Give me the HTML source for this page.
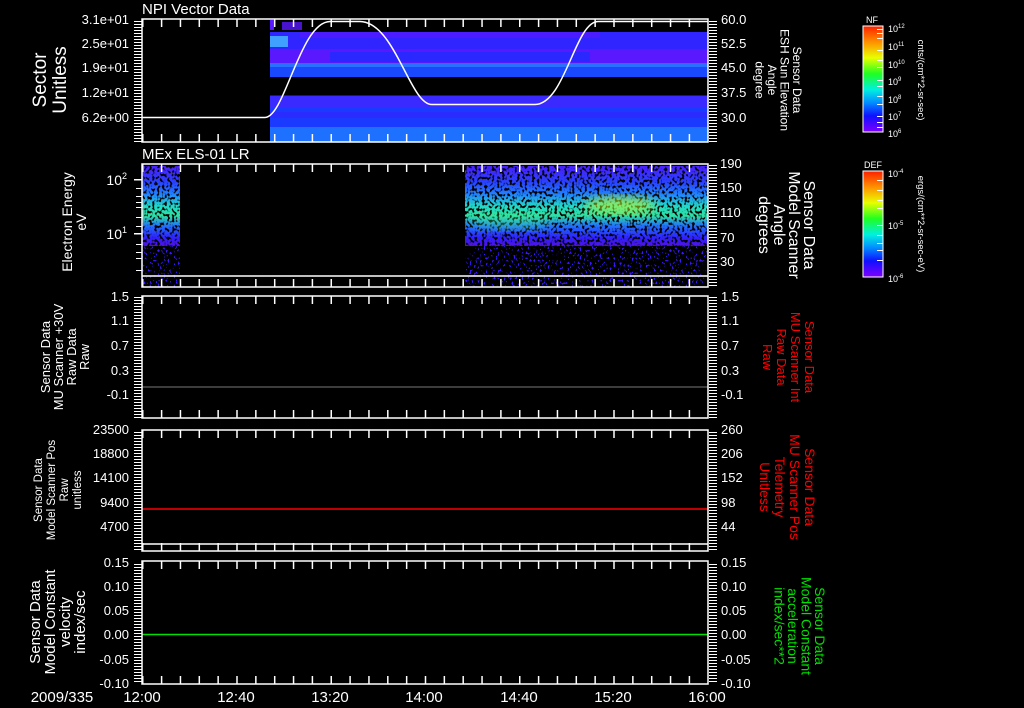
<!DOCTYPE html>
<html><head><meta charset="utf-8"><style>
html,body{margin:0;padding:0;background:#000;width:1024px;height:708px;overflow:hidden}
svg{display:block}
text{font-family:"Liberation Sans",sans-serif;fill:#fff}
</style></head><body>
<svg width="1024" height="708" viewBox="0 0 1024 708" xmlns="http://www.w3.org/2000/svg">
<defs>
<pattern id="tk" width="10" height="3" patternUnits="userSpaceOnUse"><rect x="0" y="0" width="10" height="1" fill="#fff"/></pattern>
<pattern id="tkx" width="18.85" height="10" patternUnits="userSpaceOnUse" x="142"><rect x="0" y="0" width="1.5" height="10" fill="#fff"/></pattern>
<linearGradient id="rb" x1="0" y1="0" x2="0" y2="1">
<stop offset="0" stop-color="#ff2000"/><stop offset="0.15" stop-color="#ff9000"/><stop offset="0.3" stop-color="#e8ff00"/><stop offset="0.45" stop-color="#20ff20"/><stop offset="0.6" stop-color="#00f0e0"/><stop offset="0.72" stop-color="#0090ff"/><stop offset="0.85" stop-color="#1010ff"/><stop offset="1" stop-color="#8000ff"/></linearGradient>
<linearGradient id="sp" x1="0" y1="0" x2="0" y2="1">
<stop offset="0" stop-color="#4a20ff"/><stop offset="0.2" stop-color="#2a40ff"/><stop offset="0.35" stop-color="#2080ff"/><stop offset="0.5" stop-color="#20d8c8"/><stop offset="0.62" stop-color="#30e0a0"/><stop offset="0.75" stop-color="#2070ff"/><stop offset="0.9" stop-color="#3020ff"/><stop offset="1" stop-color="#5010e0"/></linearGradient>
<filter id="spk" x="0" y="0" width="100%" height="100%">
<feTurbulence type="fractalNoise" baseFrequency="0.4 0.35" numOctaves="1" seed="3" result="n"/>
<feColorMatrix in="n" type="matrix" values="0 0 0 0 0  0 0 0 0 0  0 0 0 0 0  8 0 0 0 -2.9" result="m"/>
<feComposite in="SourceGraphic" in2="m" operator="in"/></filter>
<filter id="spk2" x="0" y="0" width="100%" height="100%">
<feTurbulence type="fractalNoise" baseFrequency="0.5 0.4" numOctaves="1" seed="7" result="n"/>
<feColorMatrix in="n" type="matrix" values="0 0 0 0 0  0 0 0 0 0  0 0 0 0 0  12 0 0 0 -7.2" result="m"/>
<feComposite in="SourceGraphic" in2="m" operator="in"/></filter>
<filter id="bl"><feGaussianBlur stdDeviation="5"/></filter>
</defs>

<text x="142" y="14" font-size="15">NPI Vector Data</text>
<g>
<rect x="270" y="20" width="4" height="10" fill="#5a18ff"/>
<rect x="282" y="22" width="20" height="8" fill="#5a18ff" opacity="0.8"/>
<rect x="270" y="32" width="438" height="17" fill="#3024ff"/>
<rect x="300" y="32" width="300" height="6" fill="#4a1cff"/>
<rect x="270" y="36" width="18" height="11" fill="#40a0ff"/>
<rect x="270" y="49" width="438" height="14" fill="#5a18ff"/>
<rect x="330" y="52" width="260" height="10" fill="#2a28ff"/>
<rect x="270" y="63" width="438" height="14" fill="#1a48ff"/>
<rect x="270" y="63" width="438" height="4" fill="#2a70ff"/>
<rect x="270" y="95" width="438" height="2" fill="#5a18ff" opacity="0.5"/>
<rect x="270" y="96" width="438" height="12" fill="#3a2aff"/>
<rect x="270" y="108" width="438" height="19" fill="#1a3aff"/>
<rect x="270" y="112" width="438" height="6" fill="#2a2cff"/>
<rect x="270" y="127" width="438" height="15" fill="#1e70ff"/>
</g>
<path d="M142 117.5 H265 C285 117 300 22 330 21.5 H360 C395 22 410 105 432 104.5 H535 C565 104 575 22 598 21.5 H708" fill="none" stroke="#fff" stroke-width="1.5"/>

<text x="142" y="159" font-size="15">MEx ELS-01 LR</text>
<rect x="142" y="166" width="38" height="80" fill="url(#sp)" filter="url(#spk)"/>
<rect x="465" y="166" width="243" height="80" fill="url(#sp)" filter="url(#spk)"/>
<rect x="142" y="246" width="38" height="41" fill="#3a18ff" filter="url(#spk2)"/>
<rect x="465" y="246" width="243" height="41" fill="#3a18ff" filter="url(#spk2)"/>
<ellipse cx="620" cy="205" rx="35" ry="9" fill="#c0ff30" opacity="0.6" filter="url(#bl)"/>
<ellipse cx="510" cy="222" rx="40" ry="8" fill="#40ff90" opacity="0.35" filter="url(#bl)"/>
<line x1="142" y1="276" x2="708" y2="276" stroke="#fff" stroke-width="1.5"/>

<line x1="142" y1="387" x2="708" y2="387" stroke="#777" stroke-width="1"/>
<line x1="142" y1="509" x2="708" y2="509" stroke="#ff0000" stroke-width="1.5"/>
<line x1="142" y1="634.5" x2="708" y2="634.5" stroke="#00e000" stroke-width="1.5"/>
<line x1="142" y1="544" x2="708" y2="544" stroke="#fff" stroke-width="1.5"/>

<g fill="none" stroke="#fff" stroke-width="1.5">
<rect x="142" y="19" width="566" height="123"/>
<rect x="142" y="164" width="566" height="123"/>
<rect x="142" y="296" width="566" height="122"/>
<rect x="142" y="430" width="566" height="121"/>
<rect x="142" y="561" width="566" height="123"/>
</g>
<g fill="url(#tkx)">
<rect x="142" y="19" width="566" height="8"/><rect x="142" y="134" width="566" height="8"/>
<rect x="142" y="164" width="566" height="8"/><rect x="142" y="279" width="566" height="8"/>
<rect x="142" y="296" width="566" height="8"/><rect x="142" y="410" width="566" height="8"/>
<rect x="142" y="430" width="566" height="8"/><rect x="142" y="543" width="566" height="8"/>
<rect x="142" y="561" width="566" height="8"/><rect x="142" y="676" width="566" height="8"/>
</g>
<g fill="url(#tk)">
<rect x="134" y="20" width="8" height="122"/><rect x="709" y="20" width="8" height="122"/>
<rect x="709" y="165" width="8" height="122"/>
<rect x="134" y="297" width="8" height="121"/><rect x="709" y="297" width="8" height="121"/>
<rect x="134" y="431" width="8" height="120"/><rect x="709" y="431" width="8" height="120"/>
<rect x="134" y="562" width="8" height="122"/><rect x="709" y="562" width="8" height="122"/>
</g>
<g fill="#fff">
<rect x="134" y="179" width="8" height="1.5"/><rect x="136" y="188" width="6" height="1"/><rect x="136" y="196" width="6" height="1"/><rect x="136" y="202" width="6" height="1"/><rect x="136" y="207" width="6" height="1"/><rect x="136" y="217" width="6" height="1"/><rect x="136" y="226" width="6" height="1"/>
<rect x="134" y="233" width="8" height="1.5"/><rect x="136" y="244" width="6" height="1"/><rect x="136" y="252" width="6" height="1"/><rect x="136" y="258" width="6" height="1"/><rect x="136" y="270" width="6" height="1"/>
</g>

<g font-size="13" text-anchor="end">
<text x="129" y="24">3.1e+01</text><text x="129" y="48">2.5e+01</text><text x="129" y="72">1.9e+01</text><text x="129" y="97">1.2e+01</text><text x="129" y="122">6.2e+00</text>
<text x="127" y="185" font-size="14">10<tspan font-size="9" dy="-6">2</tspan></text>
<text x="127" y="239" font-size="14">10<tspan font-size="9" dy="-6">1</tspan></text>
<text x="129" y="301">1.5</text><text x="129" y="325">1.1</text><text x="129" y="350">0.7</text><text x="129" y="375">0.3</text><text x="129" y="399">-0.1</text>
<text x="129" y="434">23500</text><text x="129" y="458">18800</text><text x="129" y="482">14100</text><text x="129" y="507">9400</text><text x="129" y="531">4700</text>
<text x="129" y="567">0.15</text><text x="129" y="591">0.10</text><text x="129" y="615">0.05</text><text x="129" y="639">0.00</text><text x="129" y="664">-0.05</text><text x="129" y="688">-0.10</text>
</g>
<g font-size="13">
<text x="721" y="24">60.0</text><text x="721" y="48">52.5</text><text x="721" y="72">45.0</text><text x="721" y="97">37.5</text><text x="721" y="122">30.0</text>
<text x="720" y="168">190</text><text x="720" y="192">150</text><text x="720" y="217">110</text><text x="720" y="242">70</text><text x="720" y="266">30</text>
<text x="721" y="301">1.5</text><text x="721" y="325">1.1</text><text x="721" y="350">0.7</text><text x="721" y="375">0.3</text><text x="721" y="399">-0.1</text>
<text x="721" y="434">260</text><text x="721" y="458">206</text><text x="721" y="482">152</text><text x="721" y="507">98</text><text x="721" y="531">44</text>
<text x="721" y="567">0.15</text><text x="721" y="591">0.10</text><text x="721" y="615">0.05</text><text x="721" y="639">0.00</text><text x="721" y="664">-0.05</text><text x="721" y="688">-0.10</text>
</g>

<g text-anchor="middle">
<text transform="translate(46,80) rotate(-90)" font-size="19"><tspan x="0" y="0">Sector</tspan><tspan x="0" dy="20">Unitless</tspan></text>
<text transform="translate(72,222) rotate(-90)" font-size="14"><tspan x="0" y="0">Electron Energy</tspan><tspan x="0" dy="14">eV</tspan></text>
<text transform="translate(50,357) rotate(-90)" font-size="13"><tspan x="0" y="0">Sensor Data</tspan><tspan x="0" dy="13">MU Scanner +30V</tspan><tspan x="0" dy="13">Raw Data</tspan><tspan x="0" dy="13">Raw</tspan></text>
<text transform="translate(42,490) rotate(-90)" font-size="11.5"><tspan x="0" y="0">Sensor Data</tspan><tspan x="0" dy="13">Model Scanner Pos</tspan><tspan x="0" dy="13">Raw</tspan><tspan x="0" dy="13">unitless</tspan></text>
<text transform="translate(40,622) rotate(-90)" font-size="15"><tspan x="0" y="0">Sensor Data</tspan><tspan x="0" dy="15">Model Constant</tspan><tspan x="0" dy="15">velocity</tspan><tspan x="0" dy="15">index/sec</tspan></text>
</g>
<g text-anchor="middle">
<text transform="translate(793,80) rotate(90)" font-size="12"><tspan x="0" y="0">Sensor Data</tspan><tspan x="0" dy="12.5">ESH Sun Elevation</tspan><tspan x="0" dy="12.5">Angle</tspan><tspan x="0" dy="12.5">degree</tspan></text>
<text transform="translate(804,225) rotate(90)" font-size="16"><tspan x="0" y="0">Sensor Data</tspan><tspan x="0" dy="15">Model Scanner</tspan><tspan x="0" dy="15">Angle</tspan><tspan x="0" dy="15">degrees</tspan></text>
<text transform="translate(805,357) rotate(90)" font-size="13" style="fill:#ff0000"><tspan x="0" y="0">Sensor Data</tspan><tspan x="0" dy="14">MU Scanner Int</tspan><tspan x="0" dy="14">Raw Data</tspan><tspan x="0" dy="14">Raw</tspan></text>
<text transform="translate(805,487) rotate(90)" font-size="14" style="fill:#ff0000"><tspan x="0" y="0">Sensor Data</tspan><tspan x="0" dy="15">MU Scanner Pos</tspan><tspan x="0" dy="15">Telemetry</tspan><tspan x="0" dy="15">Unitless</tspan></text>
<text transform="translate(815,626) rotate(90)" font-size="14" style="fill:#00e000"><tspan x="0" y="0">Sensor Data</tspan><tspan x="0" dy="13.5">Model Constant</tspan><tspan x="0" dy="13.5">acceleration</tspan><tspan x="0" dy="13.5">index/sec**2</tspan></text>
</g>

<g font-size="15" text-anchor="middle">
<text x="62" y="702">2009/335</text>
<text x="142" y="702">12:00</text><text x="236" y="702">12:40</text><text x="330" y="702">13:20</text><text x="424" y="702">14:00</text><text x="519" y="702">14:40</text><text x="613" y="702">15:20</text><text x="707" y="702">16:00</text>
</g>

<rect x="863" y="26" width="20" height="106" fill="url(#rb)" stroke="#fff" stroke-width="1"/>
<rect x="863" y="171" width="20" height="106" fill="url(#rb)" stroke="#fff" stroke-width="1"/>
<g fill="#fff">
<rect x="877" y="29" width="6" height="1"/><rect x="877" y="33" width="6" height="1"/><rect x="877" y="38" width="6" height="1"/><rect x="877" y="50" width="6" height="1"/><rect x="877" y="60" width="6" height="1"/><rect x="877" y="67" width="6" height="1"/><rect x="877" y="80" width="6" height="1"/><rect x="877" y="86" width="6" height="1"/><rect x="877" y="96" width="6" height="1"/><rect x="877" y="104" width="6" height="1"/><rect x="877" y="116" width="6" height="1"/><rect x="877" y="122" width="6" height="1"/><rect x="877" y="127" width="6" height="1"/>
<rect x="877" y="180" width="6" height="1"/><rect x="877" y="190" width="6" height="1"/><rect x="877" y="200" width="6" height="1"/><rect x="877" y="208" width="6" height="1"/><rect x="877" y="225" width="6" height="1"/><rect x="877" y="235" width="6" height="1"/><rect x="877" y="243" width="6" height="1"/><rect x="877" y="250" width="6" height="1"/><rect x="877" y="260" width="6" height="1"/>
</g>
<g font-size="9">
<text x="866" y="23">NF</text><text x="864" y="168">DEF</text>
<text x="888" y="32">10<tspan font-size="6" dy="-4">12</tspan></text>
<text x="888" y="50">10<tspan font-size="6" dy="-4">11</tspan></text>
<text x="888" y="68">10<tspan font-size="6" dy="-4">10</tspan></text>
<text x="888" y="85">10<tspan font-size="6" dy="-4">9</tspan></text>
<text x="888" y="103">10<tspan font-size="6" dy="-4">8</tspan></text>
<text x="888" y="120">10<tspan font-size="6" dy="-4">7</tspan></text>
<text x="888" y="137">10<tspan font-size="6" dy="-4">6</tspan></text>
<text x="888" y="177">10<tspan font-size="6" dy="-4">-4</tspan></text>
<text x="888" y="229">10<tspan font-size="6" dy="-4">-5</tspan></text>
<text x="888" y="282">10<tspan font-size="6" dy="-4">-6</tspan></text>
</g>
<text transform="translate(918,80) rotate(90)" font-size="9.5" text-anchor="middle">cnts/(cm**2-sr-sec)</text>
<text transform="translate(918,224) rotate(90)" font-size="9.5" text-anchor="middle">ergs/(cm**2-sr-sec-eV)</text>
</svg>
</body></html>
